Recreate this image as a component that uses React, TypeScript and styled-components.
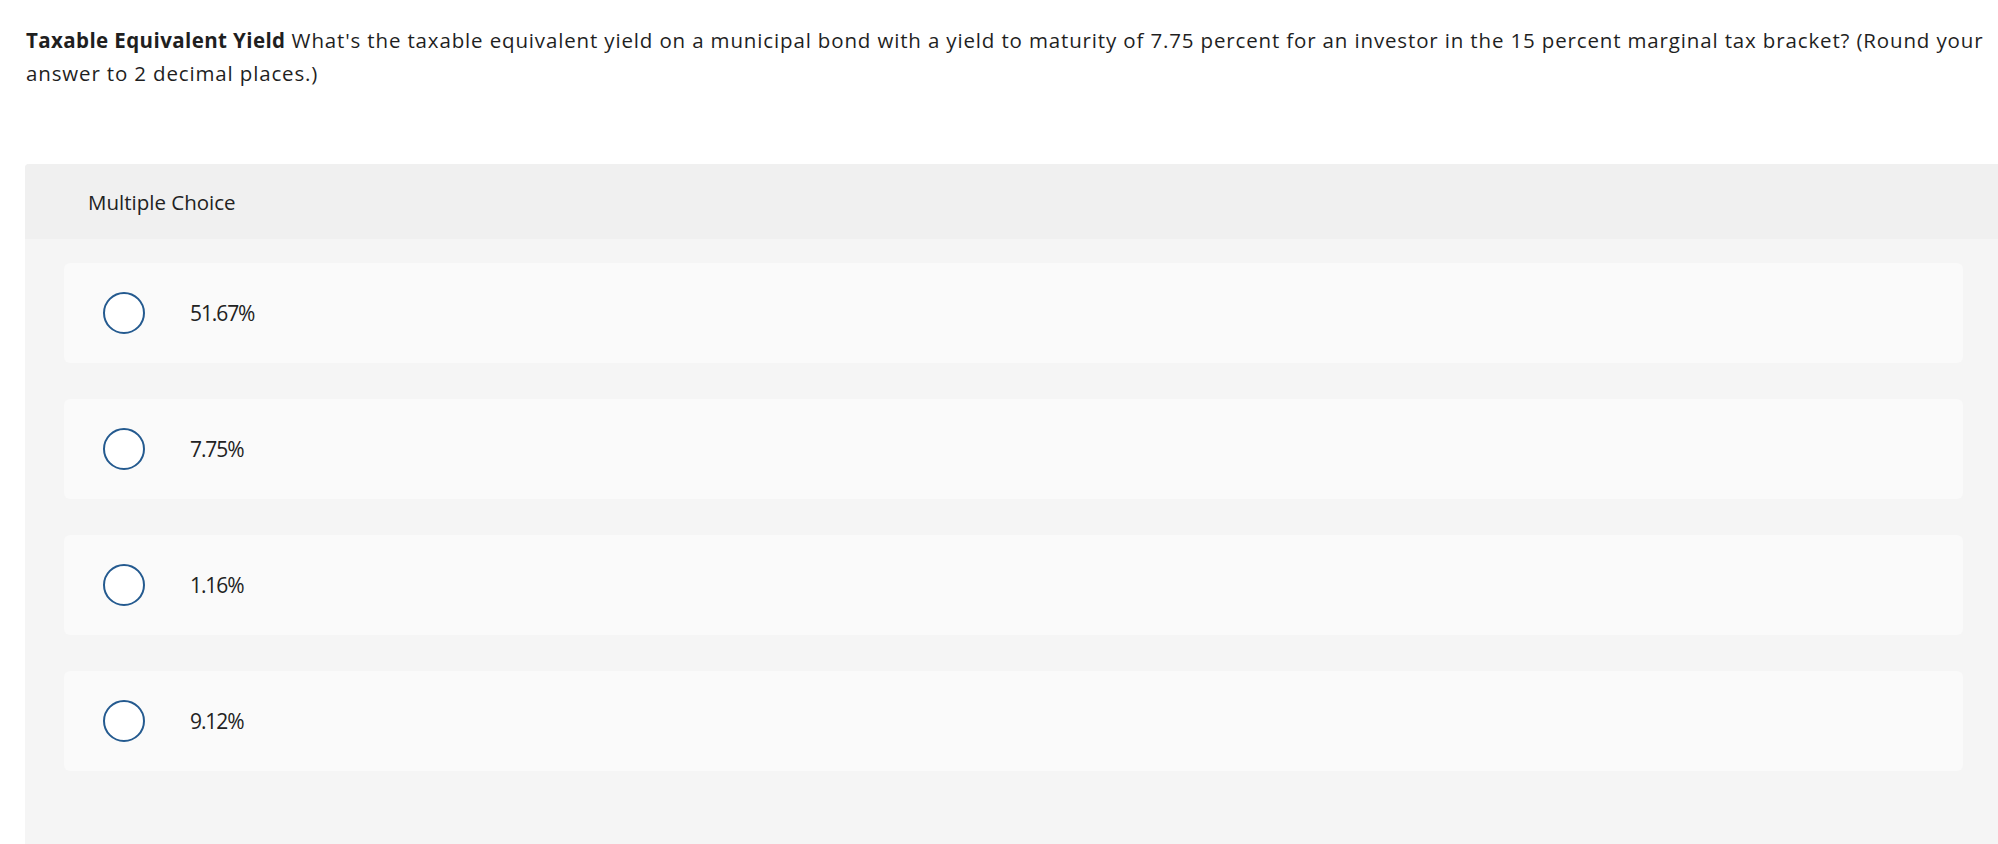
import React from "react";
import styled, { createGlobalStyle } from "styled-components";

const GlobalStyle = createGlobalStyle`
  html, body {
    margin: 0;
    padding: 0;
    background: #ffffff;
    overflow: hidden;
  }
  body {
    font-family: "Open Sans", Lato, Arial, sans-serif;
    color: #1f1f1f;
  }
`;

const Page = styled.div`
  padding: 24px 0 0 25px;
  width: 1998px;
  height: 844px;
  box-sizing: border-box;
  display: flex;
  flex-direction: column;
`;

const Question = styled.p`
  margin: 0;
  padding-left: 1px;
  font-size: 20.5px;
  line-height: 33px;
  letter-spacing: 0.85px;
  color: #1f1f1f;
`;

const Lead = styled.strong`
  font-weight: 700;
  letter-spacing: 0.4px;
`;

const Panel = styled.section`
  margin-top: 74px;
  margin-right: -4px;
  flex: 1;
  background: #f5f5f5;
  border-top-left-radius: 4px;
  display: flex;
  flex-direction: column;
`;

const PanelHeader = styled.header`
  height: 75px;
  display: flex;
  align-items: center;
  padding-left: 63px;
  background: #f0f0f0;
  border-top-left-radius: 4px;
  font-size: 20.5px;
  color: #222;
`;

const Choices = styled.div`
  display: flex;
  flex-direction: column;
  gap: 36px;
  padding: 24px 39px 0 39px;
`;

const Choice = styled.label`
  height: 100px;
  display: flex;
  align-items: center;
  padding-left: 39px;
  background: #fafafa;
  border-radius: 6px;
  cursor: pointer;
`;

const Radio = styled.span`
  width: 42px;
  height: 42px;
  box-sizing: border-box;
  border-radius: 50%;
  border: 2px solid #245a8f;
  background: #ffffff;
  flex: none;
`;

const ChoiceText = styled.span`
  margin-left: 45px;
  font-size: 21px;
  letter-spacing: -1.1px;
  color: #222;
`;

const options = ["51.67%", "7.75%", "1.16%", "9.12%"];

export default function App() {
  return (
    <>
      <GlobalStyle />
      <Page>
        <Question>
          <Lead>Taxable Equivalent Yield</Lead> What's the taxable equivalent
          yield on a municipal bond with a yield to maturity of 7.75 percent
          for an investor in the 15 percent marginal tax bracket? (Round your
          answer to 2 decimal places.)
        </Question>
        <Panel>
          <PanelHeader>Multiple Choice</PanelHeader>
          <Choices>
            {options.map((opt) => (
              <Choice key={opt}>
                <Radio />
                <ChoiceText>{opt}</ChoiceText>
              </Choice>
            ))}
          </Choices>
        </Panel>
      </Page>
    </>
  );
}
